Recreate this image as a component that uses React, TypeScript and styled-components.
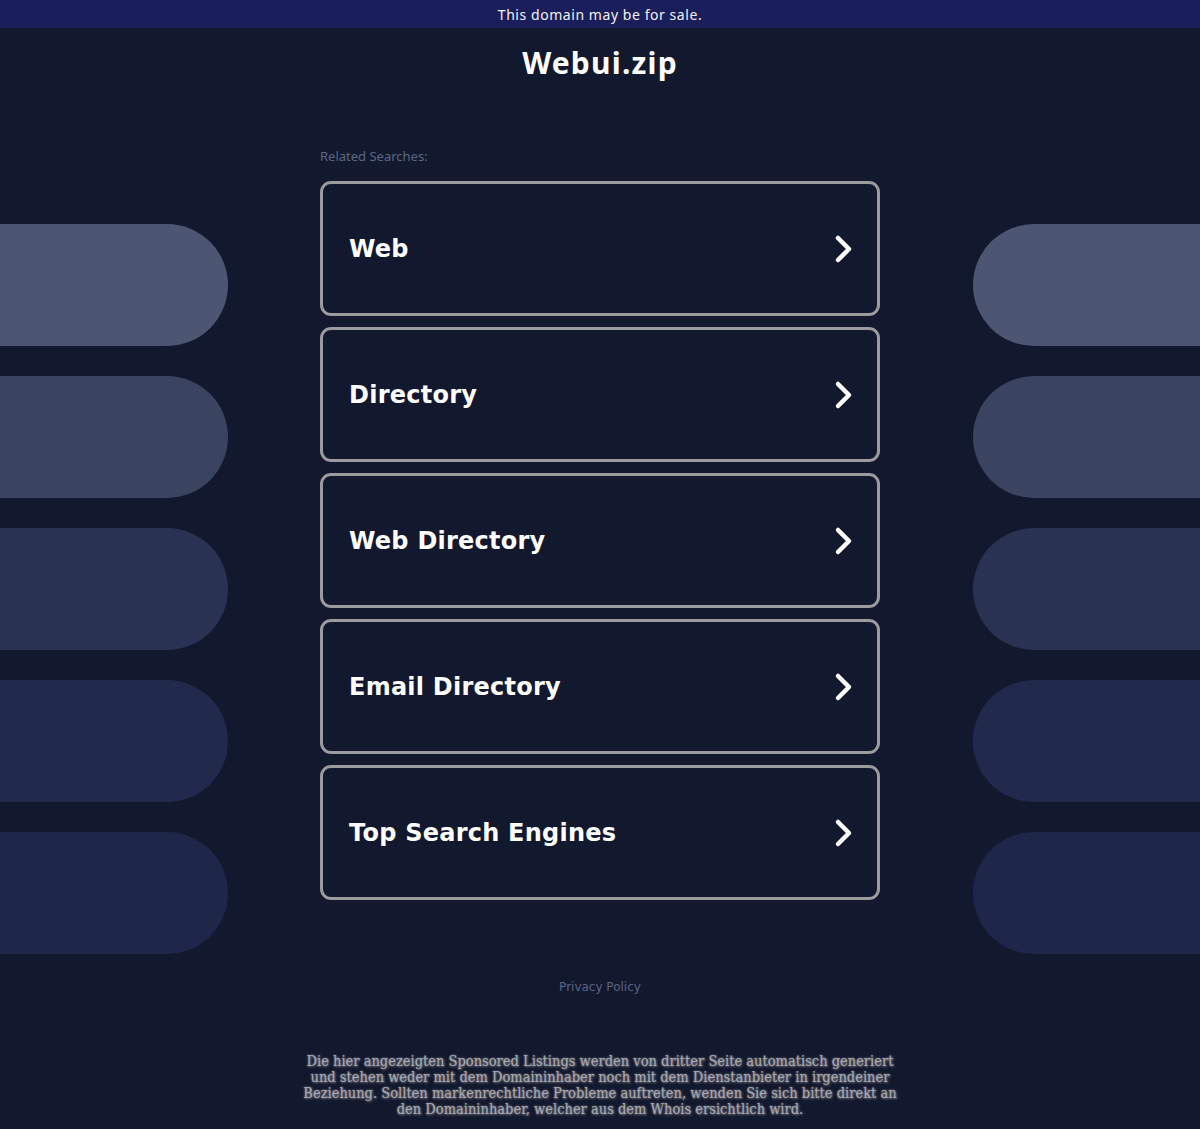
import React from "react";
import styled, { createGlobalStyle } from "styled-components";

//===============================
// @Data
//===============================
const SEARCHES = ["Web", "Directory", "Web Directory", "Email Directory", "Top Search Engines"];

const PILLS = [
  { color: "#4c5672", dotted: false },
  { color: "#3a4461", dotted: false },
  { color: "#293252", dotted: false },
  { color: "#212a4c", dotted: true },
  { color: "#1e2749", dotted: true },
];

const DISCLAIMER =
  "Die hier angezeigten Sponsored Listings werden von dritter Seite automatisch generiert und stehen weder mit dem Domaininhaber noch mit dem Dienstanbieter in irgendeiner Beziehung. Sollten markenrechtliche Probleme auftreten, wenden Sie sich bitte direkt an den Domaininhaber, welcher aus dem Whois ersichtlich wird.";

//===============================
// @Global
//===============================
const GlobalStyle = createGlobalStyle`
  html, body {
    margin: 0;
    padding: 0;
    background: #12182d;
  }
  body {
    font-family: "Noto Sans", "DejaVu Sans", sans-serif;
    color: #fff;
  }
  * { box-sizing: border-box; }
`;

//===============================
// @Styled
//===============================
const TopBar = styled.div`
  height: 28px;
  background: #1a1e5a;
  display: flex;
  align-items: center;
  justify-content: center;
  font-family: "Noto Sans", sans-serif;
  font-size: 14px;
  letter-spacing: 0.04em;
  color: #f2f2f7;
`;

const Title = styled.h1`
  margin: 0;
  padding-top: 15px;
  height: 120px;
  text-align: center;
  font-family: "Noto Sans", sans-serif;
  font-size: 30px;
  line-height: 40px;
  font-weight: 700;
  letter-spacing: 0.04em;
`;

const Main = styled.main`
  display: grid;
  grid-template-columns: 1fr 560px 1fr;
`;

const Side = styled.div<{ $side: "left" | "right" }>`
  display: flex;
  flex-direction: column;
  align-items: ${p => (p.$side === "left" ? "flex-start" : "flex-end")};
  gap: 30px;
  padding-top: 76px;
`;

const Pill = styled.div<{ $side: "left" | "right"; $color: string; $dotted: boolean }>`
  width: ${p => (p.$side === "left" ? "228px" : "227px")};
  height: 122px;
  background-color: ${p => p.$color};
  background-image: ${p =>
    p.$dotted ? "radial-gradient(rgba(18,24,45,0.3) 0.6px, transparent 1px)" : "none"};
  background-size: 5px 5px;
  border-radius: ${p => (p.$side === "left" ? "0 61px 61px 0" : "61px 0 0 61px")};
`;

const Center = styled.div`
  display: flex;
  flex-direction: column;
`;

const Label = styled.div`
  font-family: "Noto Sans", sans-serif;
  font-size: 13px;
  line-height: 16px;
  color: #5c6686;
  margin-bottom: 17px;
`;

const List = styled.ul`
  list-style: none;
  margin: 0;
  padding: 0;
  display: flex;
  flex-direction: column;
  gap: 11px;
`;

const Card = styled.a`
  display: flex;
  align-items: center;
  justify-content: space-between;
  height: 135px;
  padding: 0 22px 0 26px;
  border: 3px solid #9b9b9d;
  border-radius: 11px;
  color: #fff;
  text-decoration: none;
  font-family: "DejaVu Sans", sans-serif;
  font-weight: 700;
  font-size: 24px;
  letter-spacing: 0.01em;
  cursor: pointer;
`;

const Privacy = styled.div`
  margin-top: 25px;
  text-align: center;
  font-family: "DejaVu Sans", sans-serif;
  font-size: 12px;
  line-height: 16px;
  color: #5b6483;
`;

const Disclaimer = styled.p`
  width: 596px;
  margin: 58px auto 0;
  padding-bottom: 11px;
  text-align: center;
  font-family: "DejaVu Serif", serif;
  font-stretch: condensed;
  font-size: 14.5px;
  line-height: 16px;
  color: #a8a8b0;
  text-shadow: 0 0 2px #8a8a92, 1px 1px 3px #6c6c76;
`;

//===============================
// @Component
//===============================
const Chevron: React.FC = () => (
  <svg width="22" height="30" viewBox="0 0 22 30">
    <polyline
      points="5,4 16,15 5,26"
      fill="none"
      stroke="#fff"
      strokeWidth="4.5"
      strokeLinecap="round"
      strokeLinejoin="round"
    />
  </svg>
);

const App: React.FC = () => (
  <>
    <GlobalStyle />
    <TopBar>This domain may be for sale.</TopBar>
    <Title>Webui.zip</Title>
    <Main>
      <Side $side="left">
        {PILLS.map((p, i) => (
          <Pill key={i} $side="left" $color={p.color} $dotted={p.dotted} />
        ))}
      </Side>
      <Center>
        <Label>Related Searches:</Label>
        <List>
          {SEARCHES.map(s => (
            <li key={s}>
              <Card>
                {s}
                <Chevron />
              </Card>
            </li>
          ))}
        </List>
      </Center>
      <Side $side="right">
        {PILLS.map((p, i) => (
          <Pill key={i} $side="right" $color={p.color} $dotted={p.dotted} />
        ))}
      </Side>
    </Main>
    <Privacy>Privacy Policy</Privacy>
    <Disclaimer>{DISCLAIMER}</Disclaimer>
  </>
);

export default App;
